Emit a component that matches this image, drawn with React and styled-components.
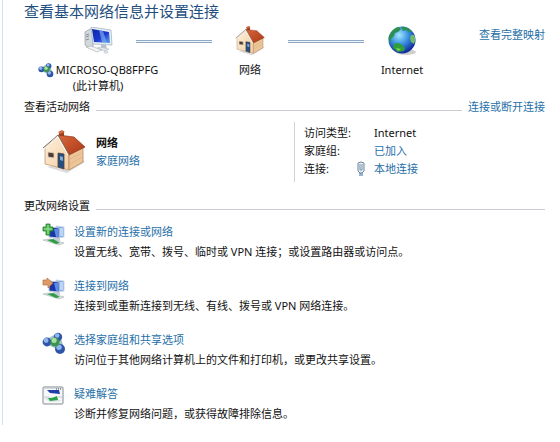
import React from "react";
import styled, { createGlobalStyle } from "styled-components";

const GlobalStyle = createGlobalStyle`
  body {
    margin: 0;
    background: #fff;
    color: #111;
    font: 11px/18px "Noto Sans", "Noto Sans CJK SC", sans-serif;
  }
`;

const Page = styled.main`
  margin-left: 2px;
  border-left: 1px solid #cfe3f4;
  padding: 0 15px 2px 21px;
`;

const Title = styled.h1`
  margin: 0;
  color: #1f4f80;
  font-size: 15px;
  font-weight: 400;
  line-height: 22px;
  white-space: nowrap;
`;

const Link = styled.a`
  color: #1f6fa8;
  text-decoration: none;
  white-space: nowrap;
  &:hover {
    text-decoration: underline;
  }
`;

const Map = styled.section`
  display: grid;
  grid-template-columns: 76px 1fr 76px 1fr 76px 105px;
  justify-items: center;
  margin-top: 4px;
  padding-left: 36px;
`;

const Device = styled.figure`
  display: flex;
  flex-direction: column;
  align-items: center;
  gap: 6px;
  margin: 0;
`;

const DeviceIcon = styled.div`
  display: flex;
  align-items: center;
  height: 30px;
`;

const DeviceName = styled.figcaption`
  line-height: 16px;
  text-align: center;
  white-space: nowrap;
`;

const NameRow = styled.div`
  display: flex;
  align-items: center;
  gap: 2px;
`;

const Connector = styled.div`
  box-sizing: border-box;
  width: 100%;
  height: 3px;
  margin-top: 14px;
  border: solid #8fa9c4;
  border-width: 1px 0;
  background: #edf4fb;
`;

const MapAction = styled.div`
  justify-self: end;
`;

const SectionHeader = styled.header`
  display: flex;
  align-items: center;
  gap: 6px;
  margin-top: ${(p) => p.$space}px;
`;

const SectionTitle = styled.h2`
  margin: 0;
  font-size: 11px;
  font-weight: 400;
  white-space: nowrap;
`;

const Rule = styled.div`
  flex: 1;
  height: 1px;
  margin-top: 6px;
  background: #c9cdd1;
`;

const ActiveNetwork = styled.section`
  display: grid;
  grid-template-columns: 1fr 251px;
  margin-top: 6px;
`;

const Network = styled.div`
  display: flex;
  align-items: center;
  gap: 10px;
  padding-left: 18px;
`;

const NetworkText = styled.div`
  display: flex;
  flex-direction: column;
`;

const Details = styled.dl`
  display: grid;
  grid-template-columns: 52px 18px 1fr;
  margin: 0;
  border-left: 1px solid #d0d3d6;
  padding: 2px 0 4px 9px;
`;

const Term = styled.dt`
  grid-column: 1;
`;

const Value = styled.dd`
  display: grid;
  grid-column: 2 / -1;
  grid-template-columns: 18px 1fr;
  align-items: center;
  margin: 0;
  & > :last-child {
    grid-column: 2;
  }
`;

const Tasks = styled.ul`
  display: flex;
  flex-direction: column;
  gap: 16px;
  margin: 8px 0 0;
  padding: 0 0 0 18px;
  list-style: none;
`;

const Task = styled.li`
  display: flex;
  gap: 8px;
`;

const TaskText = styled.div`
  display: flex;
  flex-direction: column;
  align-items: flex-start;
  gap: 2px;
`;

const Description = styled.p`
  margin: 0;
`;

const House = ({ size }) => (
  <svg width={size} height={size} viewBox="0 0 44 44" aria-hidden="true">
    <defs>
      <linearGradient id="roof" x1="0" y1="0" x2="1" y2="1">
        <stop offset="0" stopColor="#d9683c" />
        <stop offset="1" stopColor="#a93716" />
      </linearGradient>
      <linearGradient id="wall" x1="0" y1="0" x2="1" y2="1">
        <stop offset="0" stopColor="#fdf0da" />
        <stop offset="1" stopColor="#f2cda2" />
      </linearGradient>
    </defs>
    <path d="M5 37l20 6 18-11-3-3z" fill="#999" opacity=".35" />
    <path d="M3 17L16 7l11 16v17L3 34z" fill="url(#wall)" stroke="#c09a74" strokeWidth=".8" />
    <path d="M27 23l14-6v15L27 40z" fill="#ecc599" stroke="#b98a5e" strokeWidth=".8" />
    <path d="M28 29l12-6M28 34l12-7" stroke="#dcae7e" strokeWidth=".6" />
    <path d="M17 8V2l5-1v6z" fill="#9d4124" />
    <path d="M16 2l4-2 3 2-5 2z" fill="#c96a45" />
    <path d="M16 5l16 2 11 10-16 8z" fill="url(#roof)" stroke="#8c3318" strokeWidth=".7" />
    <path d="M1 18L16 5l11 20" fill="none" stroke="#85736a" strokeWidth="1" />
    <path d="M2 19L16 7l10 18" fill="none" stroke="#fff" strokeWidth="1" />
    <path d="M6 22l6 1v5l-6-1z" fill="#4f3c35" stroke="#e5d2bd" strokeWidth=".8" />
    <path d="M16 23l6 1v15l-6-2z" fill="#234e82" stroke="#5a4035" strokeWidth=".8" />
    <path d="M18 26l3 1v4l-3-1z" fill="#82acd0" />
  </svg>
);

const Computer = () => (
  <svg width="30" height="28" viewBox="0 0 30 28" aria-hidden="true">
    <defs>
      <linearGradient id="screen" x1="0" y1="0" x2="1" y2="1">
        <stop offset="0" stopColor="#0c27a4" />
        <stop offset=".55" stopColor="#1b38cf" />
        <stop offset="1" stopColor="#5fa4ef" />
      </linearGradient>
    </defs>
    <path d="M2 5l5-3 3 1v17l-4 1-4-3z" fill="#d3d8dd" stroke="#929ba4" strokeWidth=".7" />
    <path d="M3 8l3-1M3 10l3-1M3 13l3-1" stroke="#707b86" strokeWidth=".8" />
    <path d="M8 0l20 3 1 15-19-1z" fill="#e6edf4" stroke="#9badbf" strokeWidth=".7" />
    <path d="M9 2l17 3 1 11-16-1z" fill="url(#screen)" />
    <path d="M16 3l4 1 4 12-5-1z" fill="#88b9f4" opacity=".6" />
    <path d="M18 18l5 0 1 4-6-1z" fill="#b8c2cc" />
    <path d="M14 21l3-1 9 2-4 2z" fill="#e1e6eb" stroke="#a8b3be" strokeWidth=".5" />
    <path d="M3 20l5-1 11 4-5 2z" fill="#f2f4f6" stroke="#a3abb3" strokeWidth=".6" />
    <ellipse cx="23" cy="25" rx="2" ry="1.2" fill="#eceff2" stroke="#a3abb3" strokeWidth=".5" />
  </svg>
);

const Globe = () => (
  <svg width="30" height="30" viewBox="0 0 30 30" aria-hidden="true">
    <defs>
      <radialGradient id="sea" cx=".4" cy=".32" r=".7">
        <stop offset="0" stopColor="#a5e6ff" />
        <stop offset=".45" stopColor="#3f98e2" />
        <stop offset="1" stopColor="#0c2398" />
      </radialGradient>
    </defs>
    <ellipse cx="19" cy="26" rx="10" ry="3" fill="#888" opacity=".4" />
    <circle cx="15" cy="14" r="13.5" fill="url(#sea)" />
    <path d="M3 8c2-4 6-7 9-7l2 2-3 3-3 1-1 3-3 3-1 4c-2-4-2-6 0-9z" fill="#2f8f52" />
    <path d="M14 1c5-1 9 2 11 5l-3 0-3-2-3 1z" fill="#2c8f58" />
    <path d="M24 9l3 0c2 4 1 7 0 9l-3-2-1-4z" fill="#6dbb6c" />
    <path d="M7 18c3-2 6-1 8 1l3 3-1 3-6 1-5-4z" fill="#2f9f3c" />
    <path d="M9 22l5 1-3 2z" fill="#84d65b" />
  </svg>
);

const Ball = ({ x, y, r, green }) => (
  <g>
    <circle cx={x} cy={y} r={r} fill={green ? "#3c9450" : "#2f55a8"} />
    <circle cx={x - r * 0.2} cy={y - r * 0.35} r={r * 0.55} fill={green ? "#a9dfa0" : "#8fb6ec"} />
  </g>
);

const HomeGroup = ({ size }) => (
  <svg width={size} height={size} viewBox="0 0 24 24" aria-hidden="true">
    <path d="M4 11l12-7 4 14z" fill="#c3dce0" stroke="#9cc0c8" strokeWidth="4" strokeLinejoin="round" />
    <Ball x={16} y={6} r={4.2} />
    <Ball x={5} y={11} r={4.4} />
    <Ball x={18} y={18} r={5} />
    <Ball x={13} y={11} r={4.6} green />
  </svg>
);

const Screens = ({ children }) => (
  <svg width="24" height="24" viewBox="0 0 24 24" aria-hidden="true">
    <path d="M14 3l8 1v10l-8 1z" fill="#7ea5e4" stroke="#cbd8e8" />
    <path d="M18 5h3v8h-3z" fill="#b9d5f8" />
    <path d="M7 4l10 1v10L7 14z" fill="#1a35a5" stroke="#b9c9dd" />
    <path d="M12 6l4 0v8l-2 0z" fill="#5a8ce8" />
    <path d="M11 15h7v3h-7z" fill="#c3ced8" />
    <path d="M1 17l7-1 14 4-5 2z" fill="#dfe6e8" stroke="#a4b0b6" strokeWidth=".6" />
    <path d="M5 17l6-1 7 4-4 1z" fill="#2f9d48" />
    {children}
  </svg>
);

const NewConnection = () => (
  <Screens>
    <path d="M4 1h4v3h3v4H8v4H4V8H1V4h3z" fill="#4cb652" stroke="#257c33" strokeWidth=".8" />
    <path d="M6 2v9M2 6h8" stroke="#a0e494" />
  </Screens>
);

const ConnectNetwork = () => (
  <Screens>
    <path d="M1 3h4V1l6 5-5 5V8H1z" fill="#e09a68" stroke="#b3703f" strokeWidth=".7" />
  </Screens>
);

const Troubleshoot = () => (
  <svg width="24" height="24" viewBox="0 0 24 24" aria-hidden="true">
    <rect x="1" y="2" width="20" height="17" rx="1" fill="#f7f8f9" stroke="#858b91" />
    <path d="M2 3h18v1H2z" fill="#d4dae0" />
    <path d="M14 4h1M16 4h1M18 4h1" stroke="#465563" />
    <path d="M5 5h12l1 4-10-1z" fill="#203da8" />
    <path d="M2 13l8-1 10 4-12 1z" fill="#dbe3e5" />
    <path d="M6 13h4l5-2 1 4-8 1z" fill="#29a148" />
    <path d="M2 12h5M16 12h4" stroke="#c5cbd0" />
  </svg>
);

const Plug = () => (
  <svg width="10" height="16" viewBox="0 0 10 16" aria-hidden="true">
    <path d="M2 2l3-1 3 1v8l-2 2H4l-2-2z" fill="#e8eff5" stroke="#6e8496" />
    <path d="M4 3v6h2V3" fill="none" stroke="#7796ae" />
    <path d="M4 12v3M6 12v3" stroke="#2b6da5" />
  </svg>
);

const tasks = [
  {
    icon: <NewConnection />,
    title: "设置新的连接或网络",
    text: "设置无线、宽带、拨号、临时或 VPN 连接；或设置路由器或访问点。",
  },
  {
    icon: <ConnectNetwork />,
    title: "连接到网络",
    text: "连接到或重新连接到无线、有线、拨号或 VPN 网络连接。",
  },
  {
    icon: <HomeGroup size={24} />,
    title: "选择家庭组和共享选项",
    text: "访问位于其他网络计算机上的文件和打印机，或更改共享设置。",
  },
  {
    icon: <Troubleshoot />,
    title: "疑难解答",
    text: "诊断并修复网络问题，或获得故障排除信息。",
  },
];

export default function App() {
  return (
    <>
      <GlobalStyle />
      <Page lang="zh-CN">
        <Title>查看基本网络信息并设置连接</Title>
        <Map>
          <Device>
            <DeviceIcon>
              <Computer />
            </DeviceIcon>
            <DeviceName>
              <NameRow>
                <HomeGroup size={16} />
                MICROSO-QB8FPFG
              </NameRow>
              (此计算机)
            </DeviceName>
          </Device>
          <Connector />
          <Device>
            <DeviceIcon>
              <House size={30} />
            </DeviceIcon>
            <DeviceName>网络</DeviceName>
          </Device>
          <Connector />
          <Device>
            <DeviceIcon>
              <Globe />
            </DeviceIcon>
            <DeviceName>Internet</DeviceName>
          </Device>
          <MapAction>
            <Link href="#map">查看完整映射</Link>
          </MapAction>
        </Map>

        <SectionHeader $space={4}>
          <SectionTitle>查看活动网络</SectionTitle>
          <Rule />
          <Link href="#connect">连接或断开连接</Link>
        </SectionHeader>
        <ActiveNetwork>
          <Network>
            <House size={44} />
            <NetworkText>
              <strong>网络</strong>
              <Link href="#home">家庭网络</Link>
            </NetworkText>
          </Network>
          <Details>
            <Term>访问类型:</Term>
            <Value>
              <span>Internet</span>
            </Value>
            <Term>家庭组:</Term>
            <Value>
              <Link href="#homegroup">已加入</Link>
            </Value>
            <Term>连接:</Term>
            <Value>
              <Plug />
              <Link href="#local">本地连接</Link>
            </Value>
          </Details>
        </ActiveNetwork>

        <SectionHeader $space={15}>
          <SectionTitle>更改网络设置</SectionTitle>
          <Rule />
        </SectionHeader>
        <Tasks>
          {tasks.map((task) => (
            <Task key={task.title}>
              {task.icon}
              <TaskText>
                <Link href="#task">{task.title}</Link>
                <Description>{task.text}</Description>
              </TaskText>
            </Task>
          ))}
        </Tasks>
      </Page>
    </>
  );
}
